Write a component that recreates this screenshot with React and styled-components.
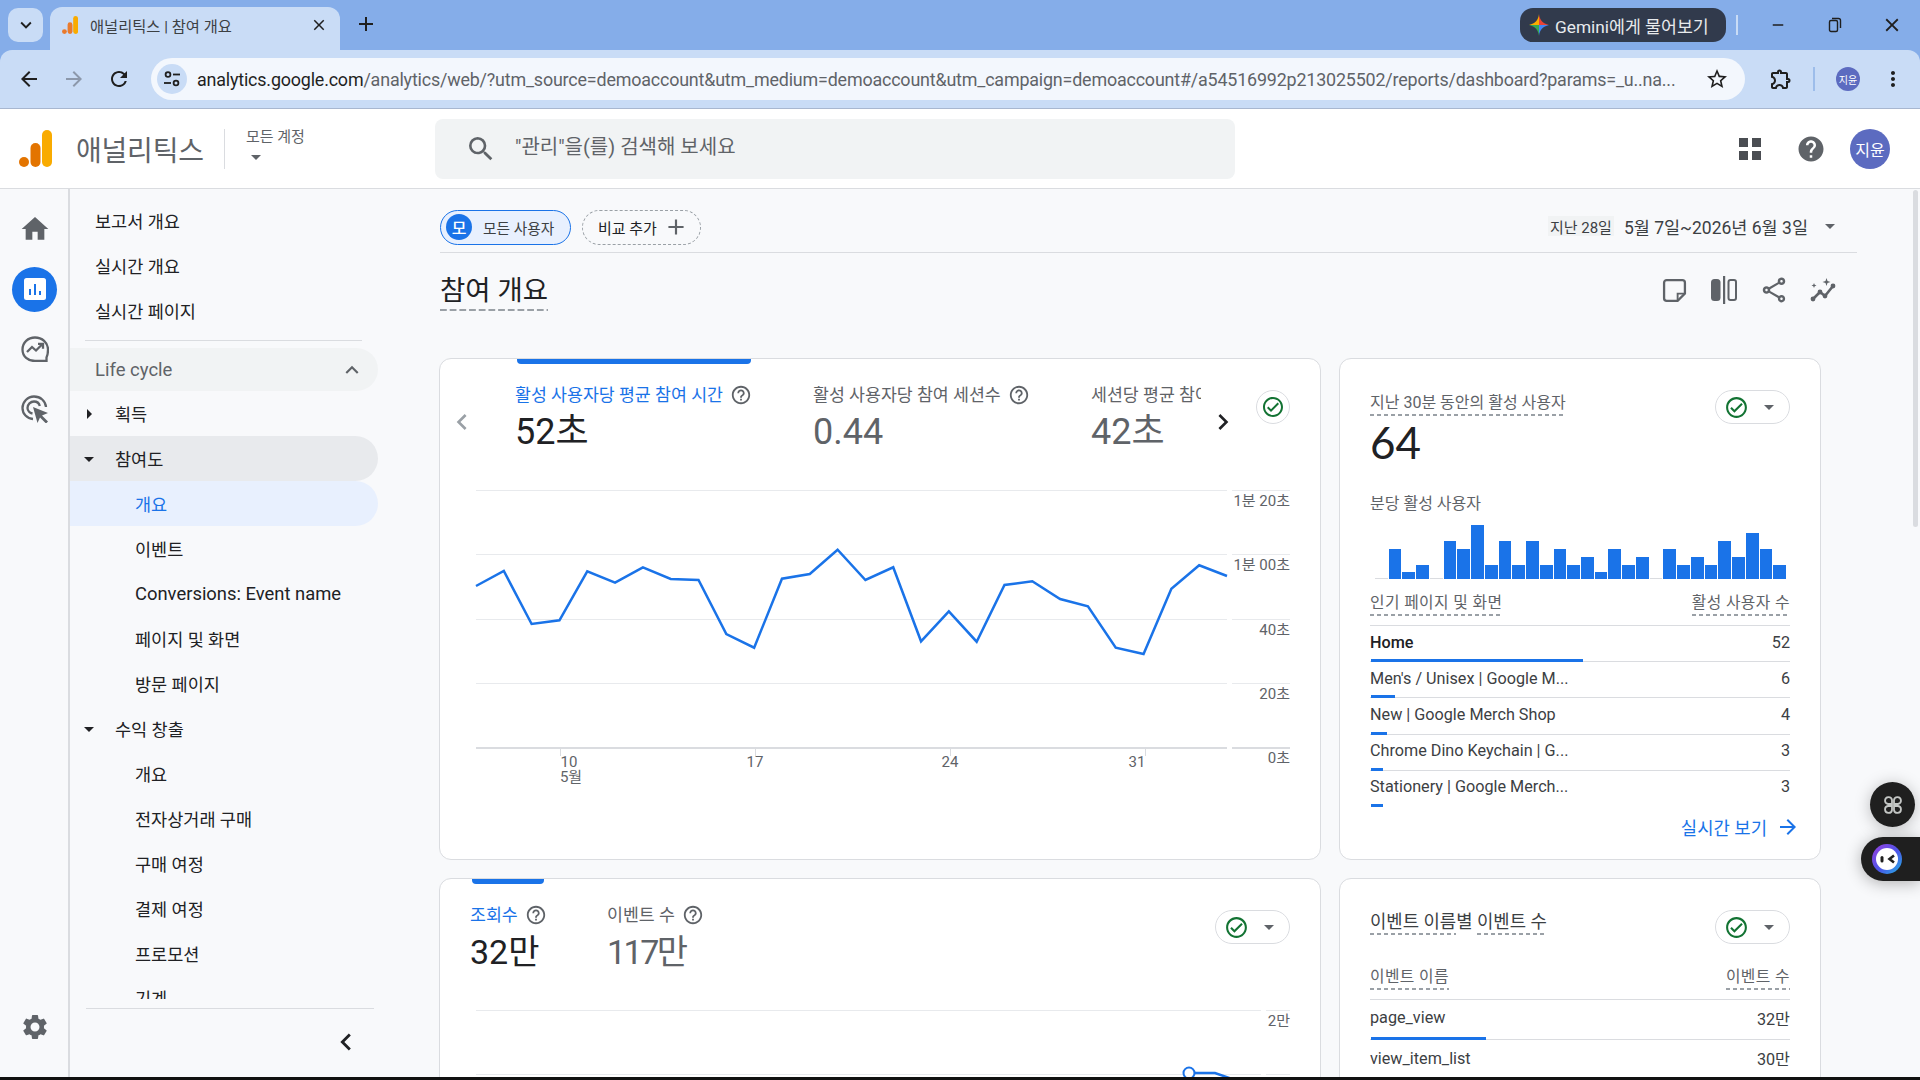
import React from "react";
import styled, { createGlobalStyle } from "styled-components";
import {
  MdHome, MdSettings, MdHelp, MdSearch, MdArrowBack, MdArrowForward, MdRefresh, MdStarBorder,
  MdOutlineExtension, MdMoreVert, MdClose, MdAdd, MdKeyboardArrowDown, MdKeyboardArrowUp,
  MdChevronLeft, MdChevronRight, MdArrowDropDown, MdArrowRight, MdHelpOutline,
  MdOutlineCheckCircle, MdOutlineShare, MdRemove,
} from "react-icons/md";

const SANS = `Roboto, "Noto Sans CJK KR", sans-serif`;

const Global = createGlobalStyle`
  html, body { margin: 0; height: 100%; overflow: hidden; }
  body { font-family: ${SANS}; color: #202124; background: #f8f9fb; }
  * { box-sizing: border-box; }
`;

const Page = styled.div`
  position: relative; width: 1920px; height: 1080px; display: flex; flex-direction: column; overflow: hidden; background: #85ade9;
`;

/* ---------- browser chrome ---------- */
const TabStrip = styled.div`
  height: 50px; flex: none; background: #85ade9; display: flex; align-items: flex-end; padding-left: 8px;
`;
const TabMenu = styled.div`
  width: 35px; height: 34px; margin-bottom: 8px; border-radius: 10px; background: #c9dcf6; color: #1f1f1f;
  display: flex; align-items: center; justify-content: center; font-size: 22px;
`;
const Tab = styled.div`
  width: 290px; height: 43px; margin-left: 7px; background: #c9dcf6; border-radius: 12px 12px 0 0;
  display: flex; align-items: center; padding: 0 12px 7px 12px; font-size: 15.300px; color: #3c4043;
`;
const TabTitle = styled.span`flex: 1; margin-left: 12px;`;
const NewTab = styled.div`
  margin: 0 0 9px 9px; width: 34px; height: 34px; display: flex; align-items: center; justify-content: center; font-size: 24px; color: #1f1f1f;
`;
const Spacer = styled.div`flex: 1;`;
const Gemini = styled.div`
  width: 206px; height: 34px; margin-bottom: 8px; background: #313a4c; color: #e8eaed; border-radius: 13px;
  display: flex; align-items: center; padding-left: 9px; gap: 6px; font-size: 17.300px; white-space: nowrap;
`;
const StripSep = styled.div`width: 2px; height: 20px; margin: 0 0 15px 10px; background: #c9dcf6;`;
const WinButton = styled.div`
  width: 57px; height: 50px; display: flex; align-items: center; justify-content: center; color: #1f1f1f;
`;

const Toolbar = styled.div`
  height: 59px; flex: none; background: #c9dcf6; border-bottom: 1px solid #a8b7d0; border-radius: 12px 12px 0 0;
  display: flex; align-items: center;
`;
const NavBtn = styled.div`
  width: 45px; height: 40px; display: flex; align-items: center; justify-content: center; font-size: 24px;
  color: ${(p) => (p.$off ? "#8c98ab" : "#1f1f1f")};
`;
const Omnibox = styled.div`
  width: 1594px; height: 42px; margin-left: 10px; border-radius: 21px; background: #f3f7fd;
  display: flex; align-items: center; padding-left: 6px; font-size: 17.900px;
`;
const SiteInfo = styled.div`
  flex: none; width: 30px; height: 30px; border-radius: 50%; background: #c9dcf6; display: flex; align-items: center; justify-content: center;
`;
const Url = styled.div`flex: 1; margin-left: 10px; white-space: nowrap; overflow: hidden; color: #5f6368; letter-spacing: -0.01em;`;
const Host = styled.span`color: #1f1f1f;`;
const StarSlot = styled.div`flex: none; width: 50px; display: flex; justify-content: flex-start; padding-left: 10px; font-size: 24px; color: #1f1f1f;`;
const ToolSep = styled.div`width: 2px; height: 24px; background: #9dbdea; margin: 0 21px 0 19px;`;
const ToolIcon = styled.div`display: flex; align-items: center; justify-content: center; margin-left: 23px; width: 26px; font-size: 24px; color: #1f1f1f;`;
const MiniAvatar = styled.div`
  width: 24px; height: 24px; border-radius: 50%; background: #5c6bc0; color: #fff; font-size: 10px; display: flex; align-items: center; justify-content: center;
`;
const DotsSlot = styled.div`margin-left: 21px; font-size: 24px; display: flex; color: #1f1f1f;`;

/* ---------- analytics header ---------- */
const Header = styled.header`
  height: 80px; flex: none; background: #fff; border-bottom: 1px solid #dadce0; display: flex; align-items: center; padding-left: 19px;
`;
const ProductName = styled.div`margin-left: 24px; width: 148px; font-size: 28px; color: #5f6368; letter-spacing: -0.2px;`;
const HeaderDivider = styled.div`width: 1px; height: 40px; background: #dadce0;`;
const Account = styled.div`
  width: 210px; padding-left: 21px; font-size: 15px; color: #5f6368; display: flex; flex-direction: column; align-items: flex-start; margin-top: -5px;
`;
const AccountCaret = styled.div`margin-left: -2px; font-size: 24px; height: 22px; display: flex; align-items: center; color: #5f6368;`;
const SearchBox = styled.div`
  width: 800px; height: 60px; border-radius: 8px; background: #f1f3f4; display: flex; align-items: center; padding-left: 30px; gap: 18px; font-size: 20px; color: #5f6368;
`;
const SearchText = styled.span`margin-top: -6px;`;
const HeaderTools = styled.div`flex: 1; display: flex; align-items: center; justify-content: flex-end; padding-right: 30px; gap: 34px; color: #5f6368;`;
const Avatar = styled.div`
  width: 40px; height: 40px; margin-left: -10px; border-radius: 50%; background: #5c6bc0; color: #fff; font-size: 16px; display: flex; align-items: center; justify-content: center;
`;

/* ---------- body ---------- */
const Body = styled.div`flex: 1; min-height: 0; display: flex; background: #f8f9fb;`;
const Rail = styled.nav`
  width: 70px; flex: none; border-right: 2px solid #dadce0; display: flex; flex-direction: column; align-items: center; padding: 10px 0 0 1px; color: #5f6368;
`;
const RailSlot = styled.div`height: 60px; width: 68px; display: flex; align-items: center; justify-content: center;`;
const RailActive = styled.div`width: 45px; height: 45px; border-radius: 50%; background: #1a73e8; display: flex; align-items: center; justify-content: center;`;
const RailFoot = styled.div`margin-top: auto; height: 73px; display: flex; align-items: flex-start; padding-top: 8px;`;

const Side = styled.aside`width: 308px; flex: none; display: flex; flex-direction: column;`;
const NavScroll = styled.div`height: 810px; padding-top: 9px; margin-bottom: 8.500px; overflow: hidden; flex: none;`;
const NavRow = styled.div`
  height: ${(p) => p.$h || 44.950}px; width: 308px; display: flex; align-items: center;
  font-size: ${(p) => p.$size || 17.500}px; color: ${(p) => p.$color || "#202124"};
  padding-left: ${(p) => p.$indent}px;
  background: ${(p) => p.$bg || "transparent"};
  border-radius: 0 23px 23px 0;
  position: relative;
`;
const NavCaret = styled.span`position: absolute; left: 7px; top: 11px; font-size: 24px; color: #202124; display: flex;`;
const NavDivider = styled.div`height: 1px; width: 277px; margin: 7px 0 7px 15px; background: #dadce0;`;
const LifeChevron = styled.span`position: absolute; right: 13px; top: 9px; font-size: 26px; color: #5f6368; display: flex;`;
const SideFoot = styled.div`
  margin: 0 4px 0 16px; border-top: 1px solid #dadce0; flex: 1; display: flex; justify-content: flex-end; padding: 16px 11px 0 0; font-size: 34px; color: #202124;
`;

const Main = styled.main`flex: 1; min-width: 0; padding-left: 61px; overflow: hidden;`;
const FilterBar = styled.div`
  width: 1417px; height: 64px; margin-left: 1px; border-bottom: 1px solid #dadce0; display: flex; align-items: center; padding-top: 13px;
`;
const UserPill = styled.div`
  width: 131px; height: 35px; border: 1px solid #1a73e8; border-radius: 18px; background: #e8f0fe; display: flex; align-items: center; padding-left: 5px; gap: 11px; font-size: 14.700px; color: #3c4043; white-space: nowrap;
`;
const UserBadge = styled.span`
  width: 26px; height: 26px; border-radius: 50%; background: #1a73e8; color: #fff; font-size: 16px; font-weight: 500; display: flex; align-items: center; justify-content: center;
`;
const ComparePill = styled.div`
  width: 119px; height: 35px; margin-left: 11px; border: 1px dashed #9aa0a6; border-radius: 18px; display: flex; align-items: center; padding-left: 15px; gap: 6px; font-size: 15px; color: #202124; white-space: nowrap;
`;
const PlusIcon = styled.span`display: flex; font-size: 26px; color: #5f6368;`;
const DateChip = styled.div`
  margin-left: auto; margin-top: -2px; height: 20px; background: #f1f3f4; padding: 0 2px; display: flex; align-items: center; font-size: 15px; color: #3c4043; 
`;
const DateText = styled.div`margin: -2px 0 0 10px; font-size: 17.500px; color: #3c4043;`;
const DateCaret = styled.div`margin: -2px 15px 0 10px; font-size: 24px; display: flex; color: #5f6368;`;

const TitleRow = styled.div`height: 105px; margin-left: 1px; width: 1409px; display: flex; align-items: flex-start; padding-top: 20px;`;
const Dashed = styled.span`
  display: inline-block; padding-bottom: ${(p) => p.$pad ?? 3}px;
  background-image: linear-gradient(to right, #9aa0a6 ${(p) => p.$fill || 62}%, transparent 0);
  background-size: ${(p) => p.$period || 7}px 2px; background-repeat: repeat-x; background-position: left bottom;
`;
const PageTitle = styled.h1`margin: 0; font-size: 27.500px; font-weight: 400; line-height: 36px; color: #202124;`;
const TitleIcons = styled.div`margin-left: auto; display: flex; color: #5f6368; margin-top: 2px;`;
const TitleIcon = styled.div`width: 50px; height: 30px; display: flex; align-items: center; justify-content: center;`;

const Grid = styled.div`display: grid; grid-template-columns: 882px 482px; grid-template-rows: 502px 400px; gap: 18px;`;
const Card = styled.section`
  position: relative; background: #fff; border: 1px solid #dadce0; border-radius: 12px; overflow: hidden;
`;
const TabsRow = styled.div`height: 121px; position: relative; display: flex; padding-left: ${(p) => p.$left}px;`;
const TabsClip = styled.div`display: flex; overflow: hidden; width: ${(p) => p.$w}px;`;
const Metric = styled.div`position: relative; flex: none; width: ${(p) => p.$w}px; padding-top: 26px; white-space: nowrap;`;
const Indicator = styled.div`
  position: absolute; top: 0; left: 2px; width: ${(p) => p.$w}px; height: 5px; background: #1a73e8; border-radius: 0 0 4px 4px;
`;
const MetricLabel = styled.div`
  height: 20px; display: flex; align-items: center; gap: 7px; font-size: 17.300px; line-height: 20px; color: ${(p) => (p.$on ? "#1a73e8" : "#5f6368")};
`;
const HelpGlyph = styled.span`display: flex; font-size: 22px; color: #5f6368;`;
const MetricValue = styled.div`
  margin-top: 5px; font-size: ${(p) => p.$size || 36}px; letter-spacing: ${(p) => p.$track || 0}px; line-height: 44px; color: ${(p) => (p.$on ? "#202124" : "#5f6368")};
`;
const Arrow = styled.div`
  position: absolute; top: 47px; left: ${(p) => p.$left}px; font-size: 32px; display: flex; color: ${(p) => p.$color};
`;
const CheckRound = styled.div`
  position: absolute; top: 31px; right: 30px; width: 34px; height: 34px; border: 1px solid #dadce0; border-radius: 50%; display: flex; align-items: center; justify-content: center; color: #137333; font-size: 24px;
`;
const CheckPill = styled.div`
  position: absolute; top: 31px; right: 30px; width: 75px; height: 34px; border: 1px solid #dadce0; border-radius: 17px; display: flex; align-items: center; padding-left: 8px; color: #137333; font-size: 25px;
`;
const PillCaret = styled.span`display: flex; color: #5f6368; font-size: 24px; margin-left: 8px;`;
const ChartSvg = styled.svg`display: block;`;

const Side2 = styled.div`padding: 0 30px;`;
const RTitle = styled.div`
  padding-top: ${(p) => p.$top}px; font-size: ${(p) => p.$size}px; line-height: 20px; color: ${(p) => p.$color};
`;
const BigNumber = styled.div`font-family: Lato, ${SANS}; font-size: 44px; line-height: 50px; margin-top: 1px; color: #202124;`;
const SubTitle = styled.div`margin-top: 27px; font-size: 16px; line-height: 20px; color: #5f6368;`;
const Bars = styled.div`
  margin: 9px 4px 0 5px; height: 56px; display: grid; grid-template-columns: repeat(30, 1fr); column-gap: 1px; align-items: end;
`;
const Bar = styled.div`background: ${(p) => (p.$empty ? "#dadce0" : "#1a73e8")};`;
const TableHead = styled.div`
  margin-top: ${(p) => p.$top}px; height: 39px; display: flex; justify-content: space-between; align-items: flex-start; padding-top: 3px; border-bottom: 1px solid #dadce0; font-size: 15.800px; color: #5f6368; letter-spacing: 0.4px;
`;
const Row = styled.div`
  position: relative; height: ${(p) => p.$h}px; display: flex; justify-content: space-between; align-items: center; padding-bottom: 3px; font-size: 16.200px; color: #3c4043;
  border-bottom: 1px solid ${(p) => (p.$last ? "transparent" : "#dadce0")};
`;
const RowName = styled.span`color: ${(p) => (p.$dark ? "#202124" : "#3c4043")}; font-weight: ${(p) => (p.$dark ? 500 : 400)};`;
const RowBar = styled.div`position: absolute; left: 1px; bottom: -1px; height: 3px; background: #1a73e8;`;
const LinkRow = styled.div`
  margin-top: 7px; margin-right: -10px; display: flex; justify-content: flex-end; align-items: center; gap: 9px; font-size: 17.800px; color: #1a73e8;
`;
const LinkIcon = styled.span`display: flex; font-size: 24px;`;

const Scrollbar = styled.div`
  position: absolute; top: 190px; right: 2px; width: 5px; height: 337px; background: #dadce0; border-radius: 3px;
`;
const FloatRound = styled.div`
  position: absolute; top: 782px; left: 1870px; width: 45px; height: 45px; border-radius: 50%; background: #1f1f1f; display: flex; align-items: center; justify-content: center;
  box-shadow: 0 2px 16px rgba(0,0,0,.25);
`;
const FloatPill = styled.div`
  position: absolute; top: 837px; left: 1861px; width: 59px; height: 44px; border-radius: 22px 0 0 22px; background: #1f1f1f; padding-left: 11px; display: flex; align-items: center;
  box-shadow: 0 2px 16px rgba(0,0,0,.3);
`;
const BottomEdge = styled.div`height: 3px; flex: none; background: #111;`;

/* ---------- drawings ---------- */
const GaLogo = ({ h = 37, dark = "#e37400", light = "#f9ab00" }) => (
  <svg width={(h * 33) / 37} height={h} viewBox="0 0 33 37">
    <circle cx="5" cy="32" r="5" fill={dark} />
    <rect x="11.500" y="13" width="10" height="24" rx="5" fill={dark} />
    <rect x="23" y="0" width="10" height="37" rx="5" fill={light} />
  </svg>
);
const SiteIcon = () => (
  <svg width="20" height="20" viewBox="0 0 20 20" fill="none" stroke="#1f1f1f" strokeWidth="1.800">
    <circle cx="6" cy="5.500" r="2.400" /><path d="M11 5.500h7" /><circle cx="14" cy="14" r="2.400" /><path d="M2 14h7" />
  </svg>
);
const Spark = () => (
  <svg width="20" height="22" viewBox="0 0 20 22">
    <defs><clipPath id="gemstar"><path d="M10 0c.7 6 3.700 9.500 10 11-6.300 1.500-9.300 5-10 11-.7-6-3.700-9.500-10-11 6.300-1.500 9.300-5 10-11z" /></clipPath></defs>
    <g clipPath="url(#gemstar)">
      <rect x="0" y="0" width="10" height="11" fill="#f9ab00" />
      <rect x="10" y="0" width="10" height="11" fill="#ea4335" />
      <rect x="0" y="11" width="10" height="11" fill="#34a853" />
      <rect x="10" y="11" width="10" height="11" fill="#4285f4" />
    </g>
  </svg>
);
const Restore = () => (
  <svg width="14" height="16" viewBox="0 0 14 16" fill="none" stroke="#1f1f1f" strokeWidth="1.400">
    <rect x="1.500" y="3.500" width="8" height="11" rx="1.500" /><path d="M4 1.500h6.500a2 2 0 0 1 2 2V11" />
  </svg>
);
const Grid4 = () => (
  <svg width="24" height="24" viewBox="0 0 24 24" fill="#4a4d52">
    <rect x="1" y="1" width="9" height="9" /><rect x="14" y="1" width="9" height="9" /><rect x="1" y="14" width="9" height="9" /><rect x="14" y="14" width="9" height="9" />
  </svg>
);
const ReportsIcon = () => (
  <svg width="24" height="24" viewBox="0 0 24 24">
    <rect x="1" y="1" width="22" height="22" rx="2.500" fill="#fff" />
    <path d="M6 12h2v6H6zM11 7h2v11h-2zM16 14h2v4h-2z" fill="#1a73e8" />
  </svg>
);
const ExploreIcon = () => (
  <svg width="28" height="26" viewBox="0 0 28 26" fill="none" stroke="#5f6368" strokeWidth="2.300">
    <path d="M25.500 21.500c1-2 1.500-4.500 1.500-8C27 6.500 21 1.500 14 1.500S1.500 6.500 1.500 13.500 7 25 14 25h11.500z" />
    <path d="M6 16l5-5 4 3.500 6-6M17 7.800h5v5" />
  </svg>
);
const AdsIcon = () => (
  <svg width="28" height="28" viewBox="0 0 28 28" fill="none" stroke="#5f6368" strokeWidth="2.300">
    <path d="M12 24C6 23.500 1.500 19 1.500 13S6.500 1.500 13 1.500 24.500 6 25 12" />
    <path d="M11.500 18.500c-2.500-.5-5-2.600-5-5.500 0-3.500 3-6.500 6.500-6.500 3 0 5.200 2 5.800 4.500" />
    <path d="M12 12l15 6-6 2.500 6 6-2 2-6-6-2.500 5.500z" fill="#5f6368" stroke="none" />
  </svg>
);
const NoteIcon = () => (
  <svg width="25" height="25" viewBox="0 0 24 24" fill="none" stroke="#5f6368" strokeWidth="2.200">
    <path d="M4.500 2h15a2.500 2.500 0 0 1 2.500 2.500V15l-7 7H4.500A2.500 2.500 0 0 1 2 19.500v-15A2.500 2.500 0 0 1 4.500 2z" />
    <path d="M22 15h-7v7" strokeWidth="1.800" />
  </svg>
);
const CompareIcon = () => (
  <svg width="26" height="28" viewBox="0 0 26 28">
    <rect x="0" y="3" width="9.500" height="22" rx="3.500" fill="#5f6368" />
    <rect x="12" y="0" width="2.200" height="28" fill="#5f6368" />
    <rect x="17.500" y="4" width="7.500" height="20" rx="2" fill="none" stroke="#5f6368" strokeWidth="2" />
  </svg>
);
const InsightsIcon = () => (
  <svg width="28" height="24" viewBox="0 0 28 24" fill="#5f6368">
    <path d="M3 21l7-7 5 4 8-10" fill="none" stroke="#5f6368" strokeWidth="2.600" />
    <circle cx="3" cy="21" r="2.400" /><circle cx="10" cy="14" r="2.400" /><circle cx="15" cy="18" r="2.400" /><circle cx="23" cy="8" r="2.400" />
    <path d="M16.500 0l1 3 3 1-3 1-1 3-1-3-3-1 3-1zM4 5l.7 1.800L6.500 7.500l-1.800.7L4 10l-.7-1.800L1.500 7.500l1.800-.7z" />
  </svg>
);
const CmdIcon = () => (
  <svg width="20" height="20" viewBox="0 0 20 20" fill="none" stroke="#c4c7c5" strokeWidth="1.800">
    <path d="M9 9H5a3.500 3.500 0 1 1 4-4zM11 9h4a3.500 3.500 0 1 0-4-4zM9 11H5a3.500 3.500 0 1 0 4 4zM11 11h4a3.500 3.500 0 1 1-4 4z" />
  </svg>
);
const FaceIcon = () => (
  <svg width="30" height="30" viewBox="0 0 30 30">
    <defs><linearGradient id="face" x1="0" y1="0" x2="1" y2="1"><stop offset="0" stopColor="#9c3fe0" /><stop offset=".55" stopColor="#4a55e8" /><stop offset="1" stopColor="#23b7e5" /></linearGradient></defs>
    <circle cx="15" cy="15" r="15" fill="url(#face)" />
    <circle cx="15" cy="15" r="11" fill="#fff" />
    <rect x="8.500" y="12" width="3" height="6.500" rx="1.500" fill="#1f1f1f" />
    <path d="M22 11.500l-4.500 3.500 4.500 3.500" fill="none" stroke="#1f1f1f" strokeWidth="2.600" />
  </svg>
);

/* ---------- data ---------- */
const LINE_ZY = [738,693,852,841,694,728,682,717,720,882,923,716,702,629,720,682,904,814,905,735,724,777,799,923,942,746,676,708];
const LINE = LINE_ZY.map((zy, i) => `${36 + (i * 751) / 27},${(340 + zy / 3 - 480).toFixed(1)}`).join(" ");
const BARS = [0,30,7,14,0,38,30,54,14,38,14,38,14,30,14,22,7,30,14,22,0,30,14,22,14,38,22,46,30,14];
const PAGES = [
  ["Home", "52", 212, true], ["Men's / Unisex | Google M...", "6", 24], ["New | Google Merch Shop", "4", 16],
  ["Chrome Dino Keychain | G...", "3", 12], ["Stationery | Google Merch...", "3", 12],
];
const NAV = [
  { t: "획득", i: 45, c: "right" }, { t: "참여도", i: 45, c: "down", bg: "#e8eaed" },
  { t: "개요", i: 65, bg: "#e8f0fe", color: "#1a73e8" }, { t: "이벤트", i: 65 }, { t: "Conversions: Event name", i: 65, size: 18.400 },
  { t: "페이지 및 화면", i: 65 }, { t: "방문 페이지", i: 65 }, { t: "수익 창출", i: 45, c: "down" }, { t: "개요", i: 65 },
  { t: "전자상거래 구매", i: 65 }, { t: "구매 여정", i: 65 }, { t: "결제 여정", i: 65 }, { t: "프로모션", i: 65 }, { t: "기계", i: 65 },
];

const GridLines = ({ ys, labels, right = 850 }) => (
  <>
    {ys.map((y, i) => (
      <g key={y}>
        <rect x="36" y={y} width={751} height={i === 4 ? 2 : 1} fill={i === 4 ? "#dadce0" : "#e8eaed"} />
        <rect x="792" y={y} width="58" height={i === 4 ? 2 : 1} fill={i === 4 ? "#dadce0" : "#e8eaed"} />
        <text x={right} y={y + 15.500} textAnchor="end" fontSize="15" fill="#5f6368" fontFamily={SANS}>{labels[i]}</text>
      </g>
    ))}
  </>
);

export default function App() {
  return (
    <Page>
      <Global />
      <TabStrip>
        <TabMenu><MdKeyboardArrowDown /></TabMenu>
        <Tab>
          <GaLogo h={18} dark="#ea7a2c" light="#f9ab00" />
          <TabTitle>애널리틱스 | 참여 개요</TabTitle>
          <MdClose size={18} color="#1f1f1f" />
        </Tab>
        <NewTab><MdAdd /></NewTab>
        <Spacer />
        <Gemini><Spark />Gemini에게 물어보기</Gemini>
        <StripSep />
        <WinButton style={{ marginLeft: 11 }}><MdRemove size={18} /></WinButton>
        <WinButton><Restore /></WinButton>
        <WinButton><MdClose size={22} /></WinButton>
      </TabStrip>
      <Toolbar>
        <NavBtn style={{ marginLeft: 6 }}><MdArrowBack /></NavBtn>
        <NavBtn $off><MdArrowForward /></NavBtn>
        <NavBtn><MdRefresh /></NavBtn>
        <Omnibox>
          <SiteInfo><SiteIcon /></SiteInfo>
          <Url><Host>analytics.google.com</Host>/analytics/web/?utm_source=demoaccount&amp;utm_medium=demoaccount&amp;utm_campaign=demoaccount#/a54516992p213025502/reports/dashboard?params=_u..na...</Url>
          <StarSlot><MdStarBorder /></StarSlot>
        </Omnibox>
        <ToolIcon><MdOutlineExtension /></ToolIcon>
        <ToolSep />
        <MiniAvatar>지윤</MiniAvatar>
        <DotsSlot><MdMoreVert /></DotsSlot>
      </Toolbar>
      <Header>
        <GaLogo />
        <ProductName>애널리틱스</ProductName>
        <HeaderDivider />
        <Account>모든 계정<AccountCaret><MdArrowDropDown /></AccountCaret></Account>
        <SearchBox><MdSearch size={32} /><SearchText>"관리"을(를) 검색해 보세요</SearchText></SearchBox>
        <HeaderTools>
          <Grid4 />
          <MdHelp size={30} />
          <Avatar>지윤</Avatar>
        </HeaderTools>
      </Header>
      <Body>
        <Rail>
          <RailSlot><MdHome size={32} /></RailSlot>
          <RailSlot><RailActive><ReportsIcon /></RailActive></RailSlot>
          <RailSlot><ExploreIcon /></RailSlot>
          <RailSlot><AdsIcon /></RailSlot>
          <RailFoot><MdSettings size={30} /></RailFoot>
        </Rail>
        <Side>
          <NavScroll>
            <NavRow $indent={25}>보고서 개요</NavRow>
            <NavRow $indent={25}>실시간 개요</NavRow>
            <NavRow $indent={25}>실시간 페이지</NavRow>
            <NavDivider />
            <NavRow $indent={25} $h={43.500} $size={18.500} $bg="#f1f3f4" $color="#5f6368">Life cycle<LifeChevron><MdKeyboardArrowUp /></LifeChevron></NavRow>
            {NAV.map((n, i) => (
              <NavRow key={i} $indent={n.i} $bg={n.bg} $color={n.color} $size={n.size}>
                {n.c && <NavCaret>{n.c === "right" ? <MdArrowRight /> : <MdArrowDropDown />}</NavCaret>}
                {n.t}
              </NavRow>
            ))}
          </NavScroll>
          <SideFoot><MdChevronLeft /></SideFoot>
        </Side>
        <Main>
          <FilterBar>
            <UserPill><UserBadge>모</UserBadge>모든 사용자</UserPill>
            <ComparePill>비교 추가<PlusIcon><MdAdd /></PlusIcon></ComparePill>
            <DateChip>지난 28일</DateChip>
            <DateText>5월 7일~2026년 6월 3일</DateText>
            <DateCaret><MdArrowDropDown /></DateCaret>
          </FilterBar>
          <TitleRow>
            <div><Dashed $period={9.700} $fill={68} $pad={2}><PageTitle>참여 개요</PageTitle></Dashed></div>
            <TitleIcons>
              <TitleIcon><NoteIcon /></TitleIcon>
              <TitleIcon><CompareIcon /></TitleIcon>
              <TitleIcon><MdOutlineShare size={30} /></TitleIcon>
              <TitleIcon><InsightsIcon /></TitleIcon>
            </TitleIcons>
          </TitleRow>
          <Grid>
            <Card>
              <TabsRow $left={75}>
                <TabsClip $w={686}>
                  <Metric $w={298}>
                    <Indicator $w={234} />
                    <MetricLabel $on>활성 사용자당 평균 참여 시간<HelpGlyph><MdHelpOutline /></HelpGlyph></MetricLabel>
                    <MetricValue $on>52초</MetricValue>
                  </Metric>
                  <Metric $w={278}>
                    <MetricLabel>활성 사용자당 참여 세션수<HelpGlyph><MdHelpOutline /></HelpGlyph></MetricLabel>
                    <MetricValue>0.44</MetricValue>
                  </Metric>
                  <Metric $w={200}>
                    <MetricLabel>세션당 평균 참여 시간</MetricLabel>
                    <MetricValue>42초</MetricValue>
                  </Metric>
                </TabsClip>
                <Arrow $left={6} $color="#9aa0a6"><MdChevronLeft /></Arrow>
                <Arrow $left={767} $color="#202124"><MdChevronRight /></Arrow>
                <CheckRound><MdOutlineCheckCircle /></CheckRound>
              </TabsRow>
              <ChartSvg width="880" height="320" viewBox="0 0 880 320">
                <GridLines ys={[10, 74, 139, 203, 267]} labels={["1분 20초", "1분 00초", "40초", "20초", "0초"]} />
                <polyline points={LINE} fill="none" stroke="#1a73e8" strokeWidth="2.500" strokeLinejoin="miter" />
                {[120, 315, 510, 705].map((x) => <rect key={x} x={x} y="267" width="1" height="9" fill="#dadce0" />)}
                <g fontSize="15" fill="#5f6368" fontFamily={SANS}>
                  <text x="129" y="287" textAnchor="middle">10</text>
                  <text x="131" y="302" textAnchor="middle">5월</text>
                  <text x="315" y="287" textAnchor="middle">17</text>
                  <text x="510" y="287" textAnchor="middle">24</text>
                  <text x="697" y="287" textAnchor="middle">31</text>
                </g>
              </ChartSvg>
            </Card>
            <Card>
              <Side2>
                <RTitle $top={34} $size={16} $color="#5f6368"><Dashed $pad={3}>지난 30분 동안의 활성 사용자</Dashed></RTitle>
                <BigNumber>64</BigNumber>
                <SubTitle>분당 활성 사용자</SubTitle>
                <Bars>
                  {BARS.map((h, i) => <Bar key={i} $empty={!h} style={{ height: h || 1 }} />)}
                </Bars>
                <TableHead $top={8}>
                  <Dashed $pad={3}>인기 페이지 및 화면</Dashed>
                  <Dashed $pad={3}>활성 사용자 수</Dashed>
                </TableHead>
                {PAGES.map(([n, v, w, dark], i) => (
                  <Row key={n} $h={36.200} $last={i === 4}>
                    <RowName $dark={dark}>{n}</RowName>
                    <span>{v}</span>
                    <RowBar style={{ width: w }} />
                  </Row>
                ))}
                <LinkRow>실시간 보기<LinkIcon><MdArrowForward /></LinkIcon></LinkRow>
              </Side2>
              <CheckPill><MdOutlineCheckCircle /><PillCaret><MdArrowDropDown /></PillCaret></CheckPill>
            </Card>
            <Card>
              <TabsRow $left={30}>
                <Metric $w={137}>
                  <Indicator $w={72} />
                  <MetricLabel $on>조회수<HelpGlyph><MdHelpOutline /></HelpGlyph></MetricLabel>
                  <MetricValue $on $size={34}>32만</MetricValue>
                </Metric>
                <Metric $w={120}>
                  <MetricLabel>이벤트 수<HelpGlyph><MdHelpOutline /></HelpGlyph></MetricLabel>
                  <MetricValue $size={34} $track={-2.500}>117만</MetricValue>
                </Metric>
              </TabsRow>
              <CheckPill><MdOutlineCheckCircle /><PillCaret><MdArrowDropDown /></PillCaret></CheckPill>
              <ChartSvg width="880" height="120" viewBox="0 0 880 120">
                <rect x="36" y="10" width="785" height="1" fill="#e8eaed" />
                <rect x="36" y="74" width="785" height="1" fill="#e8eaed" />
                <rect x="826" y="10" width="24" height="1" fill="#e8eaed" />
                <rect x="826" y="74" width="24" height="1" fill="#e8eaed" />
                <text x="850" y="26" textAnchor="end" fontSize="15" fill="#5f6368" fontFamily={SANS}>2만</text>
                <path d="M755 73h20l20 7" fill="none" stroke="#1a73e8" strokeWidth="2.500" />
                <circle cx="749" cy="73" r="5.500" fill="#fff" stroke="#1a73e8" strokeWidth="2" />
              </ChartSvg>
            </Card>
            <Card>
              <Side2>
                <RTitle $top={33} $size={17.800} $color="#3c4043">
                  <Dashed $pad={3}>이벤트 이름</Dashed>별 <Dashed $pad={3}>이벤트 수</Dashed>
                </RTitle>
                <TableHead $top={25.500}>
                  <Dashed $pad={3}>이벤트 이름</Dashed>
                  <Dashed $pad={3}>이벤트 수</Dashed>
                </TableHead>
                <Row $h={40.500}>
                  <RowName>page_view</RowName><span>32만</span><RowBar style={{ width: 115 }} />
                </Row>
                <Row $h={40.500}>
                  <RowName>view_item_list</RowName><span>30만</span><RowBar style={{ width: 107 }} />
                </Row>
              </Side2>
              <CheckPill><MdOutlineCheckCircle /><PillCaret><MdArrowDropDown /></PillCaret></CheckPill>
            </Card>
          </Grid>
        </Main>
      </Body>
      <BottomEdge />
      <Scrollbar />
      <FloatRound><CmdIcon /></FloatRound>
      <FloatPill><FaceIcon /></FloatPill>
    </Page>
  );
}
